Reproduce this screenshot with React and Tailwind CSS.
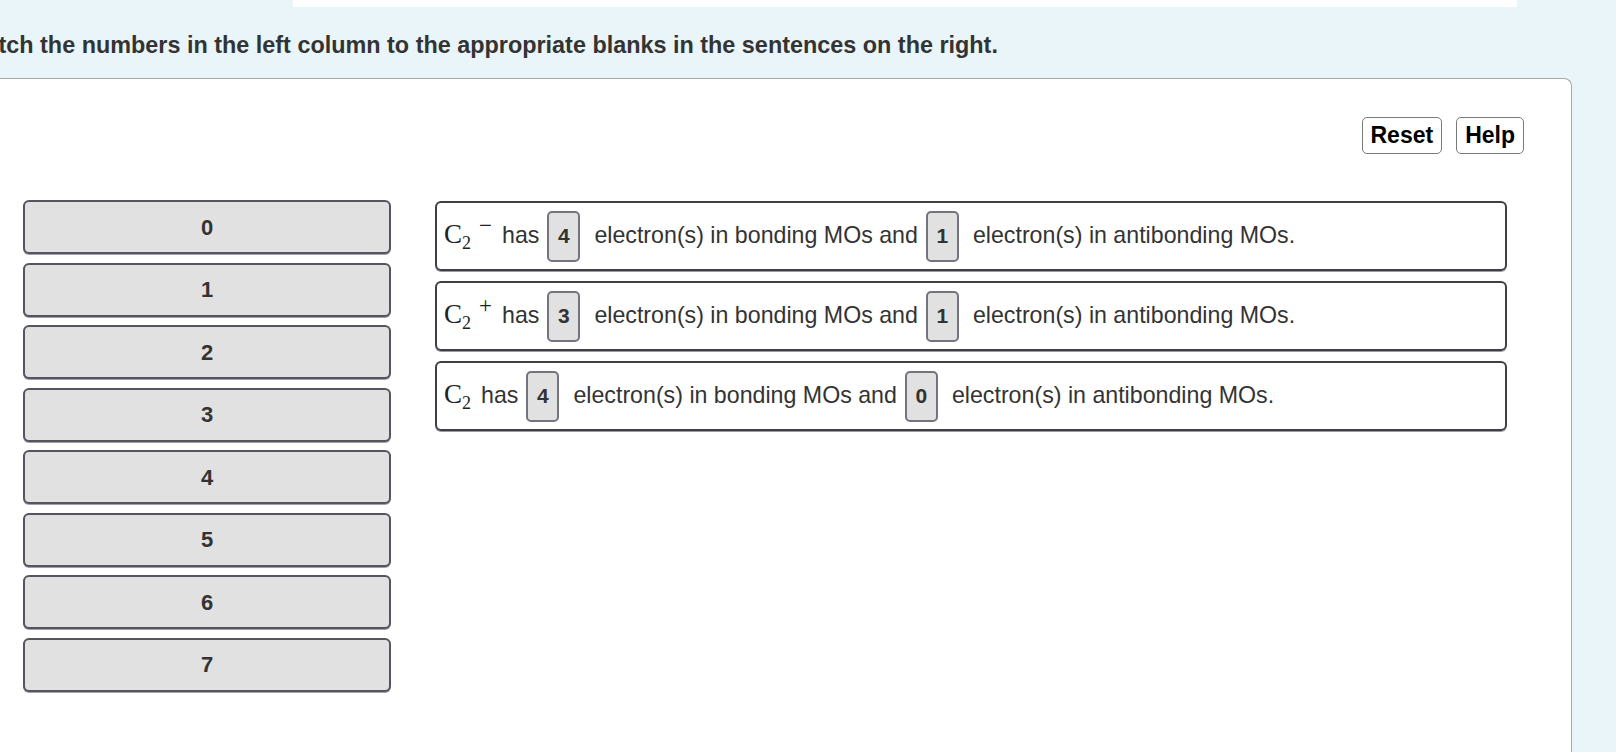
import React from "react";

const choices = [0, 1, 2, 3, 4, 5, 6, 7];

const sentences = [
  { charge: "−", bonding: 4, antibonding: 1 },
  { charge: "+", bonding: 3, antibonding: 1 },
  { charge: null, bonding: 4, antibonding: 0 },
];

const Blank = ({ value, className }) => (
  <span
    className={`inline-flex items-center justify-center w-[33px] h-[51px] rounded-[5px] border-2 border-[#74747f] bg-[#e1e1e1] text-[21px] font-bold text-[#333] ${className}`}
  >
    {value}
  </span>
);

const Formula = ({ charge }) => (
  <span className="inline-flex items-baseline font-['Liberation_Serif',serif] text-[27px] text-[#222]">
    C
    <span className="relative top-[6px] text-[18px]">2</span>
    {charge && (
      <span className="relative -top-[10px] ml-[8px] text-[23px]">{charge}</span>
    )}
  </span>
);

const App = () => {
  return (
    <div className="w-[1616px] h-[752px] overflow-hidden bg-[#e9f5f8] font-['Liberation_Sans',Arial,sans-serif] text-[#333]">
      {/* top strip */}
      <div className="ml-[293px] w-[1224px] h-[7px] bg-white" />

      {/* instructions */}
      <div className="h-[71px] pt-[23px] -ml-[34px] whitespace-nowrap text-[23.4px] leading-[30px] font-bold text-[#333]">
        Match the numbers in the left column to the appropriate blanks in the sentences on the right.
      </div>

      {/* question panel */}
      <div className="-ml-[10px] w-[1582px] h-[680px] bg-white border-t border-r border-[#a5a9ad] rounded-tr-[8px]">
        <div className="flex justify-end gap-[14px] pr-[47px] pt-[38px]">
          <button className="h-[37px] px-[8px] rounded-[5px] border border-[#7a7a7a] bg-white text-[23px] font-bold text-black leading-none">
            Reset
          </button>
          <button className="h-[37px] px-[8px] rounded-[5px] border border-[#7a7a7a] bg-white text-[23px] font-bold text-black leading-none">
            Help
          </button>
        </div>

        <div className="flex gap-[44px] pl-[33px] mt-[46px]">
          {/* draggable numbers */}
          <div className="w-[368px] flex flex-col gap-[8.5px]">
            {choices.map((n) => (
              <div
                key={n}
                className="h-[54px] flex items-center justify-center rounded-[6px] border-2 border-[#55555f] bg-[#e1e1e1] shadow-[0_1px_0_#a0a0ae] text-[22px] font-bold text-[#333]"
              >
                {n}
              </div>
            ))}
          </div>

          {/* sentences */}
          <div className="w-[1072px] mt-[1px] flex flex-col gap-[10px]">
            {sentences.map((s, i) => (
              <div
                key={i}
                className="h-[70px] flex items-center pl-[7px] rounded-[6px] border-2 border-[#3f3f44] shadow-[0_1px_0_#9a9aa4]"
              >
                <div className="flex items-baseline whitespace-nowrap text-[23.2px] text-[#333]">
                  <Formula charge={s.charge} />
                  <span className="ml-[10px]">has</span>
                  <Blank value={s.bonding} className="ml-[8px] mr-[14px]" />
                  <span>electron(s) in bonding MOs and</span>
                  <Blank value={s.antibonding} className="ml-[8px] mr-[14px]" />
                  <span>electron(s) in antibonding MOs.</span>
                </div>
              </div>
            ))}
          </div>
        </div>
      </div>
    </div>
  );
};

export default App;
